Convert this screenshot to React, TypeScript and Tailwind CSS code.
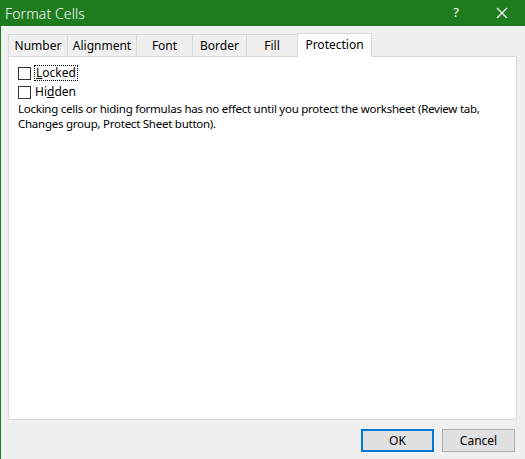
import React from "react";

const font = { fontFamily: '"Segoe UI", "Noto Sans", "Open Sans", sans-serif' };

export default function App() {
  const tabs = [
    { label: "Number", w: 59 },
    { label: "Alignment", w: 69 },
    { label: "Font", w: 56 },
    { label: "Border", w: 54 },
    { label: "Fill", w: 51 },
  ];
  return (
    <div className="w-[525px] h-[459px] bg-[#f0f0f0] border-l border-[#1e7b1e] flex flex-col text-[12px] text-black overflow-hidden" style={font}>
      <div className="h-[26px] bg-[#1e7b1e] flex items-center text-white shrink-0">
        <span className="pl-[4px] text-[14px] font-light tracking-[0.1px]">Format Cells</span>
        <span className="ml-auto w-[46px] text-center text-[13px]">?</span>
        <span className="w-[46px] flex justify-center">
          <svg width="12" height="12" viewBox="0 0 12 12"><path d="M1 1L11 11M11 1L1 11" stroke="white" strokeWidth="1.2" /></svg>
        </span>
      </div>
      <div className="pl-[7px] pr-[8px] pt-[6px] flex flex-col">
        <div className="flex items-end h-[24px]">
          {tabs.map((t) => (
            <div key={t.label} className="h-[22px] border-t border-l border-[#d9d9d9] bg-[#f0f0f0] flex items-center justify-center" style={{ width: t.w }}>
              {t.label}
            </div>
          ))}
          <div className="h-[24px] w-[75px] border-t border-l border-r border-[#d9d9d9] bg-white flex items-center justify-center -mb-px relative z-10 pb-[2px]">
            Protection
          </div>
        </div>
        <div className="h-[364px] bg-white border border-[#d9d9d9] pt-[8px] pl-[9px] pr-[8px]">
          <div className="flex items-center h-[16px]">
            <span className="w-[13px] h-[13px] border border-[#333] bg-white" />
            <span className="ml-[3px] px-[1px] border border-dotted border-black leading-[14px]"><u>L</u>ocked</span>
          </div>
          <div className="flex items-center h-[16px] mt-[3px]">
            <span className="w-[13px] h-[13px] border border-[#333] bg-white" />
            <span className="ml-[4px] leading-[14px]">Hi<u>d</u>den</span>
          </div>
          <p className="mt-[1px] leading-[15px] text-[11.5px] tracking-[-0.25px]">
            Locking cells or hiding formulas has no effect until you protect the worksheet (Review tab, Changes group, Protect Sheet button).
          </p>
        </div>
        <div className="flex justify-end gap-[8px] mt-[9px] pr-[2px]">
          <button className="w-[73px] h-[23px] bg-[#e1e1e1] border-2 border-[#0078d7] text-[12px]" style={font}>OK</button>
          <button className="w-[73px] h-[23px] bg-[#e1e1e1] border border-[#adadad] text-[12px]" style={font}>Cancel</button>
        </div>
      </div>
    </div>
  );
}
